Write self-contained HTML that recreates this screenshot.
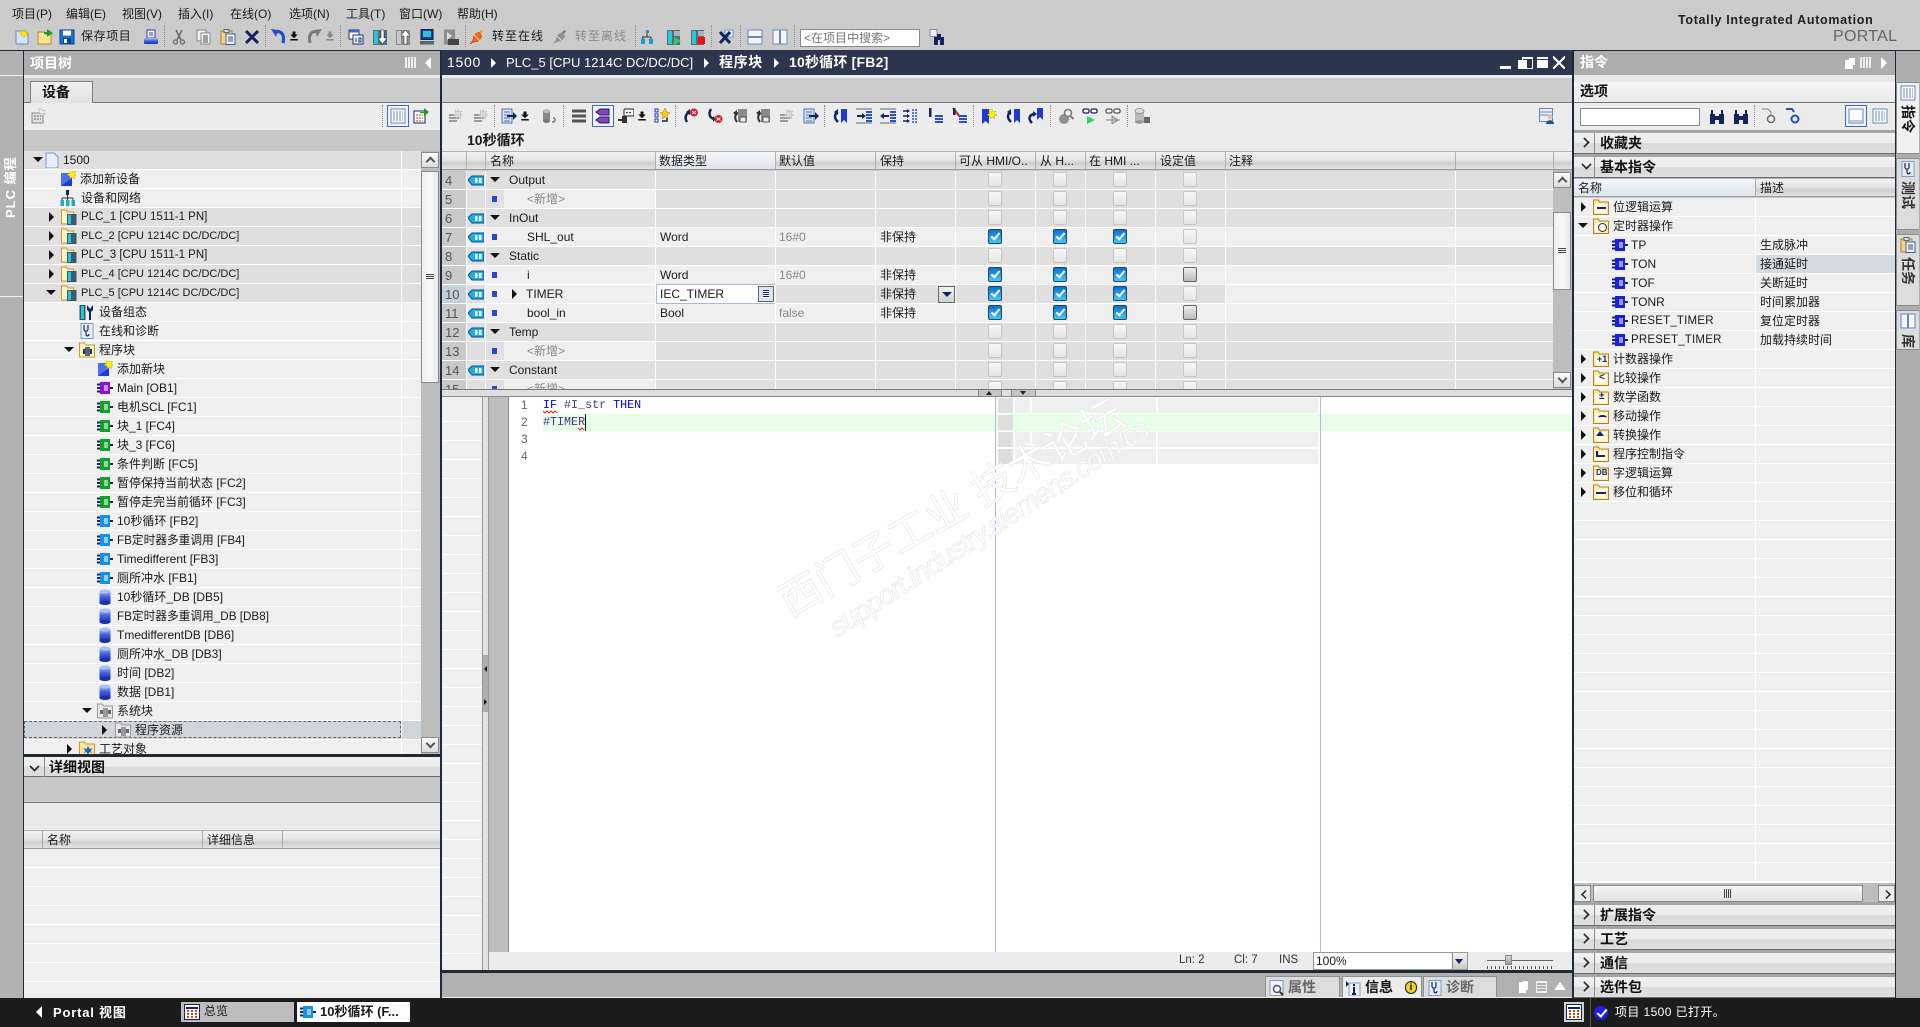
<!DOCTYPE html>
<html lang="zh"><head><meta charset="utf-8"><title>TIA Portal</title>
<style>
html,body{margin:0;padding:0;background:#1c1c1c}
#p{position:relative;width:1920px;height:1027px;overflow:hidden;background:#cbcbcb;font:12px/19px "Liberation Sans","WenQuanYi Zen Hei","Noto Sans CJK SC",sans-serif;color:#1a1a1a}
.a,.t,svg.i,.ar,.ad,.w{position:absolute}
.t{white-space:nowrap}
svg.i{width:16px;height:16px;overflow:visible}
.ar{width:0;height:0;border-left:5px solid #111;border-top:5px solid transparent;border-bottom:5px solid transparent}
.ad{width:0;height:0;border-top:5px solid #111;border-left:5px solid transparent;border-right:5px solid transparent}
.h{font-weight:bold;font-size:14px;color:#fff}
.sep{position:absolute;width:0;border-left:1px dotted #888;height:22px}
.hdr{background:linear-gradient(#f1f1f1 0,#e6e6e6 45%,#cfcfcf 65%,#e4e4e4 100%);border-top:1px solid #b4b4b4;border-bottom:1px solid #9a9a9a;box-sizing:border-box}
.phd{background:linear-gradient(#f0f0f0 0,#ececec 50%,#dadada 52%,#dedede 100%);border-bottom:1px solid #6e6e6e;box-sizing:border-box;position:absolute;left:1574px;width:321px;height:21px;font:bold 14px/20px "Liberation Sans","WenQuanYi Zen Hei","Noto Sans CJK SC",sans-serif;color:#111}
.phd span{position:absolute;left:26px;top:0}
.phd:before{content:"";position:absolute;left:20px;top:0;bottom:0;border-left:1px solid #8c8c8c}
.chev{position:absolute;left:6px;top:5px;width:7px;height:7px;border-top:2px solid #222;border-right:2px solid #222;transform:rotate(45deg) scale(.8)}
.chev.dn{transform:rotate(135deg) scale(.8);left:8px;top:3px}
/* tree */
#tree{position:absolute;left:24px;top:151px;width:397px;height:603px;overflow:hidden;background:#fff}
#tree>div{position:relative;height:18px;margin-bottom:1px;background:#efefef}
#tree>div.d{background:#dfdfdf}
/* table */
#tb{position:absolute;left:442px;top:171px;width:1111px;height:218px;overflow:hidden;background:#fff}
#tb>div{position:absolute;left:0;width:1111px;height:18px;background:#dfdfdf}
#tb>div.e{background:#efefef}
#tb .n{position:absolute;left:0;top:0;width:24px;height:18px;background:#c9c9c9;color:#555;font-size:13px;text-indent:3px}
#tb .m{position:absolute;left:62px;top:0;width:152px;height:18px;background:#efefef}
.k,.kc,.kd{position:absolute;top:1px;width:14px;height:15px;box-sizing:border-box;border-radius:2px}
.k{border:1px solid #c6c6c6;background:linear-gradient(#f8f8f8,#e4e4e4)}
.kd{border:1px solid #666;background:linear-gradient(#eee,#bbb)}
.kc{border:1px solid #1e4a6a;background:linear-gradient(#0c6fd0,#45c8f2)}
.kc:after{content:"";position:absolute;left:4px;top:1px;width:3px;height:7px;border:solid #fff;border-width:0 2px 2px 0;transform:rotate(40deg)}
.x1{left:546px}.x2{left:611px}.x3{left:671px}.x4{left:741px}
.vl{position:absolute;top:0;height:218px;width:1px;background:#fff}
.g{color:#888}
.sq{position:absolute;width:7px;height:4px}
/* right */
#ins{position:absolute;left:1574px;top:198px;width:321px;height:685px;background:#fff;overflow:hidden}
#ins>div{position:relative;height:18px;margin-bottom:1px;background:#efefef}
#ins .de{position:absolute;left:186px;top:0}
.tab{position:absolute;top:976px;height:21px;background:#dcdcdc;box-sizing:border-box;border:1px solid #8e8e8e;border-bottom:0;font:bold 14px/21px "Liberation Sans","WenQuanYi Zen Hei","Noto Sans CJK SC",sans-serif;color:#666}
.rt{position:absolute;left:1896px;width:23px;box-sizing:border-box;border:1px solid #8d8d8d;border-right:0;background:#dcdcdc}
.rtx{position:absolute;left:3px;top:22px;font:bold 14px/16px "Liberation Sans","WenQuanYi Zen Hei","Noto Sans CJK SC",sans-serif;transform:rotate(90deg);transform-origin:center;color:#333;width:16px;text-align:center;white-space:nowrap}
.sb{position:absolute;background:#f0f0f0;border:1px solid #8a8a8a;box-sizing:border-box}
.up,.dn2{position:absolute;width:18px;height:16px;background:linear-gradient(#fbfbfb,#dcdcdc);border:1px solid #8a8a8a;box-sizing:border-box}
.up:after,.dn2:after{content:"";position:absolute;left:5px;width:5px;height:5px;border:solid #555;border-width:2px 0 0 2px;transform:rotate(45deg);top:5px}
.dn2:after{transform:rotate(225deg);top:2px}
.p1{font-size:11.5px}.p2{font-size:11px}
</style></head><body>
<div id="p">
<svg width="0" height="0" style="position:absolute">
<defs>
<linearGradient id="bg" x1="0" y1="0" x2="0" y2="1"><stop offset="0" stop-color="#a9c0f5"/><stop offset=".5" stop-color="#3e5fe0"/><stop offset="1" stop-color="#1b2fa8"/></linearGradient>
<symbol id="new" viewBox="0 0 16 16"><path d="M2 2h9l3 3v10H2z" fill="#d8e4f8" stroke="#6c86b8"/><path d="M10 1l1 2 2-2-1 3 3 0-3 1 2 2-3-1-1 3-1-3-3 1 2-2-3-1h3l-1-3 2 2z" fill="#fff200" stroke="#d0b000" stroke-width=".4"/></symbol>
<symbol id="open" viewBox="0 0 16 16"><path d="M1 3h6l1 2h6v10H1z" fill="#fbe48e" stroke="#b58a2c"/><path d="M7 3h3V0l6 4-6 4V5H7z" fill="#1a9a2f"/></symbol>
<symbol id="save" viewBox="0 0 16 16"><path d="M1 1h14v14H1z" fill="#1d6fd8" stroke="#0a3f92"/><rect x="4" y="1.500" width="8" height="5" fill="#fff"/><rect x="4" y="9" width="8" height="6" fill="#0d3f8e"/><rect x="5" y="10" width="3" height="4" fill="#fff"/></symbol>
<symbol id="print" viewBox="0 0 16 16"><rect x="4" y="1" width="8" height="8" fill="#fff" stroke="#2236a8"/><path d="M6 4h4M6 6h4" stroke="#2236a8"/><rect x="1" y="9" width="14" height="6" rx="1" fill="url(#bg)"/></symbol>
<symbol id="cut" viewBox="0 0 16 16"><path d="M5 1l5 10M11 1L6 11" stroke="#6c6c6c" stroke-width="1.600" fill="none"/><circle cx="4.500" cy="13" r="2" fill="none" stroke="#6c6c6c" stroke-width="1.300"/><circle cx="11.500" cy="13" r="2" fill="none" stroke="#6c6c6c" stroke-width="1.300"/></symbol>
<symbol id="copy" viewBox="0 0 16 16"><rect x="1" y="1" width="9" height="11" fill="#eee" stroke="#888"/><rect x="5" y="4" width="9" height="11" fill="#f7f7f7" stroke="#888"/><path d="M7 7h5M7 9h5M7 11h5M7 13h5" stroke="#444"/></symbol>
<symbol id="paste" viewBox="0 0 16 16"><rect x="1" y="2" width="11" height="13" fill="#f3d583" stroke="#a47f28"/><rect x="4" y="0.500" width="5" height="3" fill="#ddd" stroke="#666"/><rect x="6" y="5" width="9" height="10.500" fill="#fff" stroke="#3a5aa0"/><path d="M8 8h5M8 10h5M8 12h5" stroke="#2b3e8a"/></symbol>
<symbol id="del" viewBox="0 0 16 16"><path d="M2 2l12 12M14 2L2 14" stroke="#14245e" stroke-width="3"/></symbol>
<symbol id="undo" viewBox="0 0 16 16"><path d="M3 3c7-2 11 2 9 11" fill="none" stroke="#1a52c8" stroke-width="3.200"/><path d="M0 0l7 1-2 7z" fill="#1a52c8"/></symbol>
<symbol id="redo" viewBox="0 0 16 16"><path d="M13 3C6 1 2 5 4 14" fill="none" stroke="#7a7a7a" stroke-width="3"/><path d="M16 0l-7 1 2 7z" fill="#7a7a7a"/></symbol>
<symbol id="dl" viewBox="0 0 16 16"><path d="M6 2h4v4h3l-5 5-5-5h3zM3 12h10v2H3z" fill="#111"/></symbol>
<symbol id="dlg" viewBox="0 0 16 16"><path d="M6 2h4v4h3l-5 5-5-5h3zM3 12h10v2H3z" fill="#888"/></symbol>
<symbol id="cmp" viewBox="0 0 16 16"><rect x="1" y="1" width="10" height="9" fill="#fff" stroke="#26367a"/><rect x="1" y="1" width="10" height="2.500" fill="#3a6ad0"/><rect x="5" y="6" width="10" height="9" fill="#e8eefa" stroke="#26367a"/><path d="M8 9v4M11 9h2v4h-2z" stroke="#26367a" fill="none"/></symbol>
<symbol id="down" viewBox="0 0 16 16"><rect x="1" y="1" width="14" height="15" fill="#5d6b78"/><rect x="2" y="2" width="4" height="13" fill="#26c7d8"/><path d="M9 1h3v8h3l-4.500 6L6 9h3z" fill="#fff" stroke="#123" stroke-width=".5"/></symbol>
<symbol id="upl" viewBox="0 0 16 16"><rect x="1" y="1" width="14" height="15" fill="#8a8a8a"/><rect x="2" y="2" width="4" height="13" fill="#c8c8c8"/><path d="M9 15h3V7h3l-4.500-6L6 7h3z" fill="#fff" stroke="#333" stroke-width=".5"/></symbol>
<symbol id="pc" viewBox="0 0 16 16"><rect x="2" y="0.500" width="12" height="10" fill="#1c3f8e" stroke="#0c1f55"/><rect x="4" y="2" width="8" height="6" fill="#2ec3d8"/><rect x="1" y="12" width="14" height="3.500" fill="#566"/></symbol>
<symbol id="rt" viewBox="0 0 16 16"><rect x="1" y="0.500" width="11" height="15" fill="#8d8d8d"/><path d="M4 3l5 4-5 4z" fill="#ddd"/><rect x="5" y="10" width="11" height="6" fill="#444"/></symbol>
<symbol id="on" viewBox="0 0 16 16"><path d="M1 15l3-4 1-5 5-3 2 3 1 1-3 5-5 1z" fill="#f4641e" stroke="#a83800" stroke-width=".5"/><path d="M10 3l3-2 1 1-2 3z" fill="#f4a020"/><path d="M4 5l7 7" stroke="#ffd8a0"/></symbol>
<symbol id="off" viewBox="0 0 16 16"><path d="M1 15l3-4 1-5 5-3 3 4-3 5-5 1z" fill="#8f8f8f"/><path d="M10 3l3-2 1 1-2 3z" fill="#777"/><path d="M4 6l6 6" stroke="#ddd"/></symbol>
<symbol id="ap" viewBox="0 0 16 16"><rect x="5" y="1" width="3" height="3" fill="#1a9ac8"/><path d="M1 8h9M6 4v4M2 8v3M10 8v3" stroke="#333"/><rect x="0" y="10" width="4" height="5" fill="#1a9ac8"/><rect x="8" y="10" width="4" height="5" fill="#1a9ac8"/></symbol>
<symbol id="stG" viewBox="0 0 16 16"><rect x="1" y="1" width="13" height="15" fill="#5d6b78"/><rect x="2" y="2" width="4" height="13" fill="#26c7d8"/><path d="M8 8l7 4-7 4z" fill="#2fd060"/><rect x="8" y="2" width="6" height="5" fill="#a8b0b8"/></symbol>
<symbol id="stR" viewBox="0 0 16 16"><rect x="1" y="1" width="13" height="15" fill="#5d6b78"/><rect x="2" y="2" width="4" height="13" fill="#26c7d8"/><rect x="8" y="8" width="7" height="7" fill="#f01010"/><rect x="8" y="2" width="6" height="5" fill="#a8b0b8"/></symbol>
<symbol id="xx" viewBox="0 0 16 16"><rect x="7" y="1" width="8" height="7" fill="#e4ecf8" stroke="#7c90b8"/><path d="M2 3l10 11M12 3L2 14" stroke="#14245e" stroke-width="3"/></symbol>
<symbol id="h2" viewBox="0 0 16 16"><rect x="1" y="1" width="14" height="14" fill="#f4f6fb" stroke="#6a86c0"/><path d="M1 8h14" stroke="#6a86c0" stroke-width="2"/></symbol>
<symbol id="v2" viewBox="0 0 16 16"><rect x="1" y="1" width="14" height="14" fill="#f4f6fb" stroke="#6a86c0"/><path d="M8 1v14" stroke="#6a86c0" stroke-width="2"/></symbol>
<symbol id="find" viewBox="0 0 16 16"><rect x="1" y="0.500" width="7" height="7" fill="#eef" stroke="#889"/><rect x="5" y="8" width="4" height="8" fill="#14245e"/><rect x="11" y="8" width="4" height="8" fill="#14245e"/><rect x="8" y="5" width="4" height="6" fill="#14245e"/></symbol>
<symbol id="bino" viewBox="0 0 16 16"><rect x="1" y="5" width="5" height="10" fill="#14245e"/><rect x="10" y="5" width="5" height="10" fill="#14245e"/><rect x="6" y="7" width="4" height="4" fill="#14245e"/><path d="M3 1v4M13 1v4" stroke="#14245e" stroke-width="2"/></symbol>
<symbol id="lst" viewBox="0 0 16 16"><path d="M1 3h14M1 8h14M1 13h14" stroke="#555" stroke-width="3"/></symbol>
<symbol id="fade" viewBox="0 0 16 16"><path d="M1 7h10M1 10h10M1 13h8" stroke="#9a9a9a" stroke-width="2"/><path d="M10 1l1 3 3-1-2 3 3 1-3 1 1 3-3-2-2 2 0-3-3-1 3-2-1-3 3 2z" fill="#d8d8d8" stroke="#aaa" stroke-width=".4"/></symbol>
<symbol id="iface" viewBox="0 0 16 16"><rect x="1" y="1" width="10" height="14" fill="#d4e0f8" stroke="#5572ae"/><path d="M3 4h6M3 7h6M3 10h6M3 13h6" stroke="#5572ae"/><path d="M6 7h6V4l4 4-4 4V9H6z" fill="#14245e"/></symbol>
<symbol id="cyl" viewBox="0 0 16 16"><rect x="2" y="3" width="7" height="10" fill="#8a8a8a"/><ellipse cx="5.500" cy="3" rx="3.500" ry="2" fill="#bbb"/><ellipse cx="5.500" cy="13" rx="3.500" ry="2" fill="#7a7a7a"/><path d="M11 14c4 0 4-4 1-4" fill="none" stroke="#777" stroke-width="1.500"/></symbol>
<symbol id="tagp" viewBox="0 0 16 16"><path d="M1 4l4-3h9v6H5zM1 12l4-3h9v6H5z" fill="#8a40c8" stroke="#14245e"/></symbol>
<symbol id="mon" viewBox="0 0 16 16"><rect x="6" y="1" width="10" height="7" rx="1" fill="#fff" stroke="#222"/><circle cx="9" cy="4.500" r=".8"/><circle cx="12" cy="4.500" r=".8"/><path d="M0 11h4V8h5v7H4v-2H0z" fill="#333"/></symbol>
<symbol id="star" viewBox="0 0 16 16"><rect x="1" y="1" width="3" height="3" fill="#fff" stroke="#2236a8"/><rect x="1" y="6" width="3" height="3" fill="#fff" stroke="#2236a8"/><rect x="1" y="11" width="3" height="3" fill="#fff" stroke="#2236a8"/><path d="M11 0l2 4 3 1-3 2 1 4-3-2-3 2 1-4-3-2 3-1z" fill="#f4c820" stroke="#a88410" stroke-width=".5"/><path d="M8 13h5v-3" fill="none" stroke="#14245e" stroke-width="1.500"/></symbol>
<symbol id="cr" viewBox="0 0 16 16"><path d="M4 14C1 9 3 5 8 4" fill="none" stroke="#14245e" stroke-width="2.500"/><path d="M7 1v6l-4-3z" fill="#14245e"/><circle cx="11" cy="4.500" r="4" fill="#d8202a"/><path d="M9 3l4 3M13 3L9 6" stroke="#fff"/></symbol>
<symbol id="cr2" viewBox="0 0 16 16"><path d="M4 1C1 6 3 10 7 11" fill="none" stroke="#14245e" stroke-width="2.500"/><path d="M6 8v6l3-3z" fill="#14245e"/><circle cx="11.500" cy="11" r="4" fill="#d8202a"/><path d="M9.500 9.500l4 3M13.500 9.500l-4 3" stroke="#fff"/></symbol>
<symbol id="gr1" viewBox="0 0 16 16"><rect x="7" y="1" width="9" height="13" fill="#8a8a8a"/><rect x="9" y="9" width="6" height="5" fill="#eee" stroke="#555"/><path d="M6 14C3 10 4 6 7 5" fill="none" stroke="#333" stroke-width="2"/><path d="M6 2v6l-4-3z" fill="#333"/></symbol>
<symbol id="ind" viewBox="0 0 16 16"><path d="M0 1h16M0 15h16" stroke="#aaa" stroke-width="2"/><path d="M1 7h5V5l4 3-4 3V9H1z" fill="#14245e"/><path d="M10 4h6M10 7h6M10 10h6M10 13h6" stroke="#2a50d0" stroke-width="2"/></symbol>
<symbol id="oud" viewBox="0 0 16 16"><path d="M0 1h16M0 15h16" stroke="#aaa" stroke-width="2"/><path d="M9 7H4V5L0 8l4 3V9h5z" fill="#14245e"/><path d="M10 4h6M10 7h6M10 10h6M10 13h6" stroke="#2a50d0" stroke-width="2"/></symbol>
<symbol id="ali" viewBox="0 0 16 16"><path d="M0 3h6M0 8h6M0 13h6" stroke="#14245e" stroke-width="1.500"/><path d="M4 1l3 2-3 2M4 6l3 2-3 2M4 11l3 2-3 2" fill="#14245e"/><path d="M9 2h6M9 5h6M9 8h6M9 11h6M9 14h6" stroke="#2a50d0" stroke-width="1.600" stroke-dasharray="2 1"/></symbol>
<symbol id="cmt" viewBox="0 0 16 16"><rect x="1" y="0" width="2.500" height="9" fill="#14245e"/><path d="M7 8h8M7 11h8M7 14h8" stroke="#2a50d0" stroke-width="2"/></symbol>
<symbol id="uncm" viewBox="0 0 16 16"><path d="M1 0l7 9" stroke="#e01818" stroke-width="2"/><rect x="1" y="0" width="2.500" height="7" fill="#14245e"/><path d="M7 8h8M7 11h8M7 14h8" stroke="#2a50d0" stroke-width="2"/></symbol>
<symbol id="bm" viewBox="0 0 16 16"><path d="M1 1h7v15l-3.500-3L1 16z" fill="#1a3cd0"/><path d="M11 1l1 3 3-1-2 3 3 1-3 1 1 3-3-2-2 2 0-3-3-1 3-2-1-3z" fill="#fff200" stroke="#b09000" stroke-width=".4"/></symbol>
<symbol id="bml" viewBox="0 0 16 16"><path d="M9 1h6v14l-3-3-3 3z" fill="#1a3cd0"/><path d="M6 14C2 10 2 6 6 4" fill="none" stroke="#14245e" stroke-width="2.500"/><path d="M6 1v6l-4-3z" fill="#14245e"/></symbol>
<symbol id="bmr" viewBox="0 0 16 16"><path d="M9 0h6v12l-3-3-3 3z" fill="#1a3cd0"/><path d="M4 15C0 11 1 7 6 6" fill="none" stroke="#14245e" stroke-width="2.500"/><path d="M5 3v6l4-3z" fill="#14245e"/></symbol>
<symbol id="mag" viewBox="0 0 16 16"><circle cx="6" cy="11" r="5" fill="#8f8f8f"/><circle cx="10" cy="5" r="3.500" fill="#eee" stroke="#777" stroke-width="1.500"/><path d="M12.500 8l3 3" stroke="#777" stroke-width="2"/></symbol>
<symbol id="gl" viewBox="0 0 16 16"><rect x="1" y="1" width="6" height="4" rx="1.500" fill="#fff" stroke="#14245e" stroke-width="1.300"/><rect x="9" y="1" width="6" height="4" rx="1.500" fill="#fff" stroke="#14245e" stroke-width="1.300"/><path d="M5 8l8 4-8 4z" fill="#2fd060"/></symbol>
<symbol id="gl2" viewBox="0 0 16 16"><rect x="1" y="1" width="6" height="4" rx="1.500" fill="#fff" stroke="#555" stroke-width="1.300"/><rect x="9" y="1" width="6" height="4" rx="1.500" fill="#fff" stroke="#555" stroke-width="1.300"/><path d="M7 8l6 4-6 4zM1 12h14" fill="#ccc" stroke="#888"/></symbol>
<symbol id="dbl" viewBox="0 0 16 16"><rect x="1" y="3" width="9" height="11" fill="#bbb"/><ellipse cx="5.500" cy="3" rx="4.500" ry="2.500" fill="#ddd" stroke="#999"/><ellipse cx="5.500" cy="14" rx="4.500" ry="1.800" fill="#999"/><rect x="10" y="9" width="6" height="6" fill="#666"/></symbol>
<symbol id="usr" viewBox="0 0 16 16"><rect x="0.500" y="0.500" width="13" height="13" fill="#e8eefa" stroke="#6a86c0"/><path d="M1 4h12M1 7h12" stroke="#6a86c0"/><circle cx="11" cy="9" r="2.500" fill="#f0c090"/><path d="M7 16c0-5 8-5 8 0z" fill="#1a50a0"/></symbol>
<symbol id="grid" viewBox="0 0 16 16"><rect x="1" y="1" width="14" height="14" fill="#fff" stroke="#6a86c0"/><path d="M3 4h10M3 6h10M3 8h10M3 10h10M3 12h10" stroke="#6a86c0" stroke-dasharray="2 1"/></symbol>
<symbol id="pan" viewBox="0 0 16 16"><rect x="1" y="1" width="14" height="14" fill="#fff" stroke="#6a86c0"/><rect x="2" y="12" width="12" height="2" fill="#b8c8e8"/></symbol>
<symbol id="cal" viewBox="0 0 16 16"><rect x="1" y="3" width="11" height="12" fill="#fff" stroke="#14245e"/><path d="M3 7h7M3 10h7M3 13h7" stroke="#c04810" stroke-dasharray="2 1"/><path d="M7 4h4V0l5 4-5 4V5H7z" fill="#1a9a2f"/></symbol>
<symbol id="addd" viewBox="0 0 16 16"><path d="M1 5h11v10H1z" fill="#ddd" stroke="#888"/><path d="M3 8h7M3 11h7" stroke="#666" stroke-dasharray="2 1"/><path d="M10 0l1 3 3-1-2 3 3 1-3 1-2-2-2 1 1-3-2-2z" fill="#eee" stroke="#999" stroke-width=".4"/></symbol>
<symbol id="nw" viewBox="0 0 16 16"><path d="M1 2h11v13H1z" fill="#1a3cd0"/><path d="M1 2h11v5L1 15z" fill="#4a70f0"/><path d="M12 -2l1 3 3-1-2 3 3 1-3 1 1 3-3-2-2 2 0-3-3-1 3-2-1-3z" fill="#fff200" stroke="#c0a000" stroke-width=".4"/></symbol>
<symbol id="net" viewBox="0 0 16 16"><rect x="6" y="0" width="3" height="5" fill="#14245e"/><path d="M2 8h11M2 8v3M7.500 5v6M13 8v3" stroke="#333"/><rect x="0.500" y="10" width="3.500" height="6" fill="#22a8c8"/><rect x="6" y="10" width="3.500" height="6" fill="#22a8c8"/><rect x="11.500" y="10" width="3.500" height="6" fill="#22a8c8"/></symbol>
<symbol id="doc" viewBox="0 0 16 16"><path d="M2 1h8l4 4v11H2z" fill="#e6edfb" stroke="#7f9ac8"/></symbol>
<symbol id="plc" viewBox="0 0 16 16"><path d="M0.500 1h5l1 2h6v12H0.500z" fill="#fff2c4" stroke="#c8982c"/><rect x="6" y="5" width="9.500" height="11" fill="#3a5a70"/><rect x="7" y="6" width="3" height="9" fill="#28c4d8"/></symbol>
<symbol id="cfg" viewBox="0 0 16 16"><rect x="0.500" y="1" width="6" height="15" fill="#2a5a78"/><rect x="2" y="2" width="3" height="13" fill="#28c4d8"/><path d="M8 1l3 4 3-4v5l-2 2v8h-2V8L8 6z" fill="#14245e"/></symbol>
<symbol id="dia" viewBox="0 0 16 16"><rect x="2" y="0.500" width="12" height="15" fill="#e6edfb" stroke="#7f9ac8"/><path d="M5 2v4c0 3 4 3 4 0V2M7 9v2c0 3 3 2 3 0" fill="none" stroke="#14245e" stroke-width="1.200"/></symbol>
<symbol id="pfo" viewBox="0 0 16 16"><path d="M0.500 1h5l1 2h9v12H0.500z" fill="#fff2c4" stroke="#c8982c"/><rect x="4" y="7" width="9" height="5" fill="#333"/><rect x="6" y="5" width="5" height="9" fill="#4a6a80"/></symbol>
<symbol id="gfo" viewBox="0 0 16 16"><path d="M0.500 1h5l1 2h9v12H0.500z" fill="#e8e8e8" stroke="#999"/><rect x="3" y="7" width="11" height="4" fill="#666"/><rect x="6" y="5" width="5" height="9" fill="#999"/></symbol>
<symbol id="tfo" viewBox="0 0 16 16"><path d="M0.500 1h5l1 2h9v12H0.500z" fill="#fbe6a0" stroke="#c8982c"/><path d="M9 5l1.500 3 3-1-2 3 2 2-3-1-1.500 3-1.500-3-3 1 2-2-2-3 3 1z" fill="#1a60d0"/></symbol>
<symbol id="blk" viewBox="0 0 16 16"><rect x="0" y="7" width="16" height="2" fill="#14245e"/><rect x="0" y="3.500" width="4" height="2" fill="#14245e"/><rect x="0" y="10.500" width="4" height="2" fill="#14245e"/><rect x="3" y="2" width="10" height="12" fill="currentColor"/><rect x="7" y="5" width="4" height="6" fill="#fff" opacity=".55"/></symbol>
<symbol id="db" viewBox="0 0 16 16"><rect x="2.500" y="2" width="11" height="12" fill="url(#bg)"/><ellipse cx="8" cy="14" rx="5.500" ry="2" fill="#1b2fa8"/><ellipse cx="8" cy="2.500" rx="5.500" ry="2" fill="#a9c0f5"/></symbol>
<symbol id="tag" viewBox="0 0 16 16"><path d="M0 8l4-4h12v9H4z" fill="#19b0e6" stroke="#0a4a8a"/><rect x="7" y="6" width="2.500" height="5" fill="#fff"/><rect x="11" y="6" width="2.500" height="5" fill="#fff"/></symbol>
<symbol id="ifo" viewBox="0 0 16 16"><path d="M0.500 1h5l1 2h9v12.500H0.500z" fill="#fce9a8" stroke="#b48420"/><rect x="2" y="5" width="12" height="9" fill="#fffbe4"/></symbol>
<symbol id="cyc" viewBox="0 0 16 16"><path d="M1 1h6l3 3v4" fill="#e8e8e8" stroke="#888"/><circle cx="10" cy="11" r="3.500" fill="none" stroke="#666" stroke-width="1.500"/></symbol>
<symbol id="cyb" viewBox="0 0 16 16"><path d="M1 1h6l2 3" fill="none" stroke="#1a50d0" stroke-width="2"/><circle cx="10" cy="11" r="3.500" fill="none" stroke="#1a50d0" stroke-width="2"/></symbol>
<symbol id="tab" viewBox="0 0 16 16"><rect x="0.500" y="0.500" width="15" height="15" fill="#fff" stroke="#14245e"/><path d="M2 4h12" stroke="#14245e" stroke-width="2"/><path d="M3 7h2M7 7h2M11 7h2M3 10h2M7 10h2M11 10h2M3 13h2M7 13h2M11 13h2" stroke="#c04810" stroke-width="2"/></symbol>
<symbol id="prp" viewBox="0 0 16 16"><rect x="1" y="0.500" width="13" height="15" fill="#eef3fd" stroke="#7f9ac8"/><circle cx="8" cy="9" r="3.500" fill="none" stroke="#555" stroke-width="1.500"/><path d="M11 12l3 3" stroke="#333" stroke-width="2"/></symbol>
<symbol id="inf" viewBox="0 0 16 16"><rect x="3" y="3" width="11" height="13" fill="#eef3fd" stroke="#7f9ac8"/><path d="M0 1l3 3-3 3zM3 8l3 3" fill="#14245e"/><path d="M8 4v2M8 7v7M6 14h4" stroke="#14245e" stroke-width="2"/></symbol>
</defs></svg>

<!-- top -->
<div class="a" style="left:0;top:0;width:1920px;height:50px;background:#cbcbcb"></div>
<span class="t" style="left:12px;top:5px">项目(P)</span><span class="t" style="left:66px;top:5px">编辑(E)</span><span class="t" style="left:122px;top:5px">视图(V)</span><span class="t" style="left:178px;top:5px">插入(I)</span><span class="t" style="left:230px;top:5px">在线(O)</span><span class="t" style="left:289px;top:5px">选项(N)</span><span class="t" style="left:346px;top:5px">工具(T)</span><span class="t" style="left:399px;top:5px">窗口(W)</span><span class="t" style="left:457px;top:5px">帮助(H)</span>
<svg class="i" style="left:14px;top:29px"><use href="#new"/></svg><svg class="i" style="left:37px;top:29px"><use href="#open"/></svg><svg class="i" style="left:59px;top:29px"><use href="#save"/></svg>
<span class="t" style="left:81px;top:27px;letter-spacing:.6px">保存项目</span>
<svg class="i" style="left:143px;top:29px"><use href="#print"/></svg><div class="sep" style="left:164px;top:25px"></div>
<svg class="i" style="left:171px;top:29px"><use href="#cut"/></svg><svg class="i" style="left:196px;top:29px"><use href="#copy"/></svg><svg class="i" style="left:220px;top:29px"><use href="#paste"/></svg><svg class="i" style="left:244px;top:29px"><use href="#del"/></svg><div class="sep" style="left:265px;top:25px"></div>
<svg class="i" style="left:271px;top:29px"><use href="#undo"/></svg><svg class="i" style="left:288px;top:30px;width:12px;height:12px"><use href="#dl"/></svg><svg class="i" style="left:306px;top:29px"><use href="#redo"/></svg><svg class="i" style="left:324px;top:30px;width:12px;height:12px"><use href="#dlg"/></svg><div class="sep" style="left:340px;top:25px"></div>
<svg class="i" style="left:348px;top:29px"><use href="#cmp"/></svg><svg class="i" style="left:372px;top:29px"><use href="#down"/></svg><svg class="i" style="left:395px;top:29px"><use href="#upl"/></svg><svg class="i" style="left:419px;top:29px"><use href="#pc"/></svg><svg class="i" style="left:443px;top:29px"><use href="#rt"/></svg><div class="sep" style="left:465px;top:25px"></div>
<svg class="i" style="left:469px;top:29px"><use href="#on"/></svg><span class="t" style="left:492px;top:27px;letter-spacing:1px">转至在线</span>
<svg class="i" style="left:552px;top:29px"><use href="#off"/></svg><span class="t" style="left:575px;top:27px;letter-spacing:1px;color:#8c8c8c">转至离线</span><div class="sep" style="left:635px;top:25px"></div>
<svg class="i" style="left:641px;top:29px"><use href="#ap"/></svg><svg class="i" style="left:666px;top:29px"><use href="#stG"/></svg><svg class="i" style="left:690px;top:29px"><use href="#stR"/></svg><div class="sep" style="left:711px;top:25px"></div>
<svg class="i" style="left:718px;top:29px"><use href="#xx"/></svg><div class="sep" style="left:740px;top:25px"></div>
<svg class="i" style="left:747px;top:29px"><use href="#h2"/></svg><svg class="i" style="left:772px;top:29px"><use href="#v2"/></svg><div class="sep" style="left:794px;top:25px"></div>
<div class="a" style="left:800px;top:29px;width:120px;height:18px;background:#fff;border:1px solid #8a8a8a;box-sizing:border-box;color:#777;line-height:17px;padding-left:3px">&lt;在项目中搜索&gt;</div>
<svg class="i" style="left:929px;top:29px"><use href="#find"/></svg>
<span class="t" style="left:1678px;top:11px;font-weight:bold;font-size:12.5px;letter-spacing:.68px;color:#222">Totally Integrated Automation</span>
<span class="t" style="left:1833px;top:27px;font-size:16px;color:#666;letter-spacing:.3px">PORTAL</span>
<div class="a" style="left:0;top:50px;width:1920px;height:1px;background:#1e2a3c"></div>

<!-- left strip -->
<div class="a" style="left:0;top:51px;width:23px;height:947px;background:#b2b2b2"></div>
<div class="a" style="left:0;top:75px;width:23px;height:1px;background:#f0f0f0"></div>
<div class="a" style="left:0;top:296px;width:23px;height:1px;background:#f0f0f0"></div>
<span class="t" style="left:-19px;top:178px;width:60px;height:20px;transform:rotate(-90deg);color:#fff;font-weight:bold;font-size:13px;line-height:20px;text-align:center;letter-spacing:1px">PLC 编程</span>
<div class="a" style="left:23px;top:51px;width:1px;height:947px;background:#1e2a3c"></div>

<!-- left panel -->
<div class="a" style="left:24px;top:51px;width:416px;height:24px;background:#adadad"></div>
<span class="t h" style="left:30px;top:52px;line-height:22px">项目树</span>
<div class="a" style="left:405px;top:57px;width:11px;height:11px;background:repeating-linear-gradient(90deg,#eee 0 2px,#adadad 2px 3px)"></div>
<div class="a" style="left:425px;top:57px;width:0;height:0;border-right:6px solid #fff;border-top:6px solid transparent;border-bottom:6px solid transparent"></div>
<div class="a" style="left:24px;top:75px;width:416px;height:3px;background:#ececec"></div>
<div class="a" style="left:24px;top:78px;width:416px;height:25px;background:#cdcdcd;border-bottom:1px solid #7a7a7a;box-sizing:border-box"></div>
<div class="a" style="left:30px;top:81px;width:63px;height:22px;box-sizing:border-box;border:1px solid #808080;border-bottom:0;background:linear-gradient(#f0f0f0,#e2e2e2);font:bold 14px/20px 'Liberation Sans','WenQuanYi Zen Hei','Noto Sans CJK SC',sans-serif;padding-left:11px;color:#111">设备</div>
<div class="a" style="left:24px;top:103px;width:416px;height:27px;background:#ececec"></div>
<svg class="i" style="left:31px;top:108px"><use href="#addd"/></svg><div class="sep" style="left:382px;top:105px"></div>
<div class="a" style="left:387px;top:105px;width:22px;height:22px;box-sizing:border-box;border:1px solid #3a6ad0;background:#f4f4f4"></div><svg class="i" style="left:390px;top:108px"><use href="#grid"/></svg><svg class="i" style="left:413px;top:108px"><use href="#cal"/></svg>
<div class="a" style="left:24px;top:130px;width:416px;height:21px;background:#c8c8c8"></div>

<div id="tree">
<div class="d"><i class="ad" style="left:9px;top:6px"></i><svg class="i" style="left:20px;top:1px"><use href="#doc"/></svg><span class="t" style="left:39px;top:0">1500</span></div>
<div><svg class="i" style="left:36px;top:1px"><use href="#nw"/></svg><span class="t" style="left:56px;top:0">添加新设备</span></div>
<div><svg class="i" style="left:36px;top:1px"><use href="#net"/></svg><span class="t" style="left:57px;top:0">设备和网络</span></div>
<div class="d"><i class="ar" style="left:25px;top:4px"></i><svg class="i" style="left:37px;top:1px"><use href="#plc"/></svg><span class="t p1" style="left:57px;top:0">PLC_1 [CPU 1511-1 PN]</span></div>
<div class="d"><i class="ar" style="left:25px;top:4px"></i><svg class="i" style="left:37px;top:1px"><use href="#plc"/></svg><span class="t p2" style="left:57px;top:0">PLC_2 [CPU 1214C DC/DC/DC]</span></div>
<div class="d"><i class="ar" style="left:25px;top:4px"></i><svg class="i" style="left:37px;top:1px"><use href="#plc"/></svg><span class="t p1" style="left:57px;top:0">PLC_3 [CPU 1511-1 PN]</span></div>
<div class="d"><i class="ar" style="left:25px;top:4px"></i><svg class="i" style="left:37px;top:1px"><use href="#plc"/></svg><span class="t p2" style="left:57px;top:0">PLC_4 [CPU 1214C DC/DC/DC]</span></div>
<div class="d"><i class="ad" style="left:22px;top:6px"></i><svg class="i" style="left:37px;top:1px"><use href="#plc"/></svg><span class="t p2" style="left:57px;top:0">PLC_5 [CPU 1214C DC/DC/DC]</span></div>
<div><svg class="i" style="left:55px;top:1px"><use href="#cfg"/></svg><span class="t" style="left:75px;top:0">设备组态</span></div>
<div><svg class="i" style="left:55px;top:1px"><use href="#dia"/></svg><span class="t" style="left:75px;top:0">在线和诊断</span></div>
<div><i class="ad" style="left:40px;top:6px"></i><svg class="i" style="left:55px;top:1px"><use href="#pfo"/></svg><span class="t" style="left:75px;top:0">程序块</span></div>
<div><svg class="i" style="left:73px;top:1px"><use href="#nw"/></svg><span class="t" style="left:93px;top:0">添加新块</span></div>
<div><svg class="i" style="left:73px;top:1px;color:#9010d0"><use href="#blk"/></svg><span class="t" style="left:93px;top:0">Main [OB1]</span></div>
<div><svg class="i" style="left:73px;top:1px;color:#12a02a"><use href="#blk"/></svg><span class="t" style="left:93px;top:0">电机SCL [FC1]</span></div>
<div><svg class="i" style="left:73px;top:1px;color:#12a02a"><use href="#blk"/></svg><span class="t" style="left:93px;top:0">块_1 [FC4]</span></div>
<div><svg class="i" style="left:73px;top:1px;color:#12a02a"><use href="#blk"/></svg><span class="t" style="left:93px;top:0">块_3 [FC6]</span></div>
<div><svg class="i" style="left:73px;top:1px;color:#12a02a"><use href="#blk"/></svg><span class="t" style="left:93px;top:0">条件判断 [FC5]</span></div>
<div><svg class="i" style="left:73px;top:1px;color:#12a02a"><use href="#blk"/></svg><span class="t" style="left:93px;top:0">暂停保持当前状态 [FC2]</span></div>
<div><svg class="i" style="left:73px;top:1px;color:#12a02a"><use href="#blk"/></svg><span class="t" style="left:93px;top:0">暂停走完当前循环 [FC3]</span></div>
<div><svg class="i" style="left:73px;top:1px;color:#1290ea"><use href="#blk"/></svg><span class="t" style="left:93px;top:0">10秒循环 [FB2]</span></div>
<div><svg class="i" style="left:73px;top:1px;color:#1290ea"><use href="#blk"/></svg><span class="t" style="left:93px;top:0;font-size:11.7px">FB定时器多重调用 [FB4]</span></div>
<div><svg class="i" style="left:73px;top:1px;color:#1290ea"><use href="#blk"/></svg><span class="t" style="left:93px;top:0">Timedifferent [FB3]</span></div>
<div><svg class="i" style="left:73px;top:1px;color:#1290ea"><use href="#blk"/></svg><span class="t" style="left:93px;top:0">厕所冲水 [FB1]</span></div>
<div><svg class="i" style="left:73px;top:1px"><use href="#db"/></svg><span class="t" style="left:93px;top:0">10秒循环_DB [DB5]</span></div>
<div><svg class="i" style="left:73px;top:1px"><use href="#db"/></svg><span class="t" style="left:93px;top:0;font-size:11.7px">FB定时器多重调用_DB [DB8]</span></div>
<div><svg class="i" style="left:73px;top:1px"><use href="#db"/></svg><span class="t" style="left:93px;top:0">TmedifferentDB [DB6]</span></div>
<div><svg class="i" style="left:73px;top:1px"><use href="#db"/></svg><span class="t" style="left:93px;top:0">厕所冲水_DB [DB3]</span></div>
<div><svg class="i" style="left:73px;top:1px"><use href="#db"/></svg><span class="t" style="left:93px;top:0">时间 [DB2]</span></div>
<div><svg class="i" style="left:73px;top:1px"><use href="#db"/></svg><span class="t" style="left:93px;top:0">数据 [DB1]</span></div>
<div><i class="ad" style="left:58px;top:6px"></i><svg class="i" style="left:73px;top:1px"><use href="#gfo"/></svg><span class="t" style="left:93px;top:0">系统块</span></div>
<div style="background:#d0d5da"><i class="a" style="left:0;top:0;width:377px;height:17px;box-sizing:border-box;border:1px dashed #666"></i><i class="ar" style="left:78px;top:4px"></i><svg class="i" style="left:91px;top:1px"><use href="#gfo"/></svg><span class="t" style="left:111px;top:0">程序资源</span></div>
<div><i class="ar" style="left:43px;top:4px"></i><svg class="i" style="left:55px;top:1px"><use href="#tfo"/></svg><span class="t" style="left:75px;top:0">工艺对象</span></div>
</div>
<div class="a" style="left:401px;top:151px;width:1px;height:603px;background:#fff"></div>
<div class="a" style="left:421px;top:151px;width:19px;height:603px;background:#bdbdbd"></div>
<div class="up" style="left:421px;top:152px"></div>
<div class="sb" style="left:421px;top:171px;width:18px;height:212px;background:linear-gradient(90deg,#eee,#f8f8f8,#e8e8e8)"></div>
<div class="a" style="left:426px;top:274px;width:8px;height:6px;background:repeating-linear-gradient(#444 0 1px,transparent 1px 2px)"></div>
<div class="dn2" style="left:421px;top:737px"></div>

<!-- detail -->
<div class="a" style="left:24px;top:754px;width:416px;height:3px;background:#1e2a3c"></div>
<div class="a" style="left:24px;top:757px;width:416px;height:20px;background:linear-gradient(#f0f0f0 0,#ececec 50%,#dadada 52%,#dedede 100%);border-bottom:1px solid #6e6e6e;box-sizing:border-box"></div>
<div class="a" style="left:44px;top:757px;width:1px;height:20px;background:#8c8c8c"></div>
<div class="chev dn" style="left:30px;top:762px"></div>
<span class="t" style="left:49px;top:758px;font-weight:bold;font-size:14px;color:#111">详细视图</span>
<div class="a" style="left:24px;top:777px;width:416px;height:26px;background:#c8c8c8;border-bottom:1px solid #7a7a7a;box-sizing:border-box"></div>
<div class="a" style="left:24px;top:803px;width:416px;height:27px;background:#e9e9e9"></div>
<div class="a hdr" style="left:24px;top:830px;width:416px;height:19px"></div>
<div class="a" style="left:42px;top:831px;width:1px;height:17px;background:#a8a8a8"></div><div class="a" style="left:202px;top:831px;width:1px;height:17px;background:#a8a8a8"></div><div class="a" style="left:282px;top:831px;width:1px;height:17px;background:#a8a8a8"></div>
<span class="t" style="left:47px;top:831px">名称</span><span class="t" style="left:207px;top:831px">详细信息</span>
<div class="a" style="left:24px;top:849px;width:416px;height:149px;background:repeating-linear-gradient(#efefef 0 18px,#fff 18px 19px)"></div>
<div class="a" style="left:440px;top:51px;width:2px;height:947px;background:#1e2a3c"></div>

<!-- center -->
<div class="a" style="left:442px;top:50px;width:1130px;height:25px;background:#2d364f"></div>
<span class="t" style="left:447px;top:53px;color:#fff;font-size:14px;letter-spacing:.7px">1500</span>
<i class="ar" style="left:491px;top:58px;border-left-color:#fff"></i>
<span class="t" style="left:506px;top:53px;color:#fff;font-size:13px">PLC_5 [CPU 1214C DC/DC/DC]</span>
<i class="ar" style="left:704px;top:58px;border-left-color:#fff"></i>
<span class="t" style="left:719px;top:53px;color:#fff;font-weight:bold;font-size:14px;letter-spacing:.6px">程序块</span>
<i class="ar" style="left:774px;top:58px;border-left-color:#fff"></i>
<span class="t" style="left:789px;top:53px;color:#fff;font-weight:bold;font-size:14px;letter-spacing:.2px">10秒循环 [FB2]</span>
<div class="a" style="left:1500px;top:66px;width:11px;height:3px;background:#fff"></div>
<div class="a" style="left:1522px;top:57px;width:9px;height:9px;border:1px solid #fff;border-top-width:2px"></div><div class="a" style="left:1518px;top:60px;width:9px;height:9px;background:#fff"></div>
<div class="a" style="left:1537px;top:57px;width:11px;height:11px;background:#fff;border-top:0"></div><div class="a" style="left:1537px;top:59px;width:11px;height:1px;background:#2d364f"></div>
<div class="a" style="left:1553px;top:56px;width:12px;height:13px;background:linear-gradient(45deg,transparent 44%,#fff 44% 56%,transparent 56%),linear-gradient(-45deg,transparent 44%,#fff 44% 56%,transparent 56%)"></div>
<div class="a" style="left:442px;top:75px;width:1130px;height:3px;background:#ececec"></div>
<div class="a" style="left:442px;top:78px;width:1130px;height:25px;background:#cdcdcd;border-bottom:1px solid #7a7a7a;box-sizing:border-box"></div>
<div class="a" style="left:442px;top:103px;width:1130px;height:27px;background:#ececec"></div>
<svg class="i" style="left:448px;top:108px"><use href="#fade"/></svg><svg class="i" style="left:473px;top:108px"><use href="#fade"/></svg><div class="sep" style="left:494px;top:105px"></div>
<svg class="i" style="left:501px;top:108px"><use href="#iface"/></svg><svg class="i" style="left:519px;top:110px;width:12px;height:12px"><use href="#dl"/></svg>
<svg class="i" style="left:541px;top:108px"><use href="#cyl"/></svg><div class="sep" style="left:563px;top:105px"></div>
<svg class="i" style="left:571px;top:108px"><use href="#lst"/></svg>
<div class="a" style="left:592px;top:105px;width:22px;height:22px;box-sizing:border-box;border:1px solid #3a6ad0;background:#f4f4f4"></div><svg class="i" style="left:595px;top:108px"><use href="#tagp"/></svg>
<svg class="i" style="left:618px;top:108px"><use href="#mon"/></svg><svg class="i" style="left:636px;top:110px;width:12px;height:12px"><use href="#dl"/></svg>
<svg class="i" style="left:654px;top:108px"><use href="#star"/></svg><div class="sep" style="left:675px;top:105px"></div>
<svg class="i" style="left:683px;top:108px"><use href="#cr"/></svg><svg class="i" style="left:707px;top:108px"><use href="#cr2"/></svg><svg class="i" style="left:731px;top:108px"><use href="#gr1"/></svg><svg class="i" style="left:754px;top:108px"><use href="#gr1"/></svg><svg class="i" style="left:779px;top:108px"><use href="#fade"/></svg>
<svg class="i" style="left:803px;top:108px"><use href="#iface"/></svg><div class="sep" style="left:824px;top:105px"></div>
<svg class="i" style="left:832px;top:108px"><use href="#bml"/></svg><svg class="i" style="left:856px;top:108px"><use href="#ind"/></svg><svg class="i" style="left:880px;top:108px"><use href="#oud"/></svg><svg class="i" style="left:903px;top:108px"><use href="#ali"/></svg><svg class="i" style="left:928px;top:108px"><use href="#cmt"/></svg><svg class="i" style="left:952px;top:108px"><use href="#uncm"/></svg><div class="sep" style="left:973px;top:105px"></div>
<svg class="i" style="left:981px;top:108px"><use href="#bm"/></svg><svg class="i" style="left:1005px;top:108px"><use href="#bml"/></svg><svg class="i" style="left:1028px;top:108px"><use href="#bmr"/></svg><div class="sep" style="left:1050px;top:105px"></div>
<svg class="i" style="left:1058px;top:108px"><use href="#mag"/></svg><svg class="i" style="left:1082px;top:108px"><use href="#gl"/></svg><svg class="i" style="left:1105px;top:108px"><use href="#gl2"/></svg><div class="sep" style="left:1127px;top:105px"></div>
<svg class="i" style="left:1134px;top:108px"><use href="#dbl"/></svg><svg class="i" style="left:1539px;top:108px"><use href="#usr"/></svg>
<div class="a" style="left:442px;top:130px;width:1130px;height:21px;background:#ececec"></div>
<span class="t" style="left:467px;top:131px;font-weight:bold;font-size:14px">10秒循环</span>
<div class="a hdr" style="left:442px;top:151px;width:1130px;height:19px"></div>
<div class="a" style="left:656px;top:152px;width:119px;height:17px;background:linear-gradient(#f4f6fa,#dde3ec)"></div>
<div class="a" style="left:466px;top:152px;width:1px;height:17px;background:#b0b0b0"></div><div class="a" style="left:485px;top:152px;width:1px;height:17px;background:#b0b0b0"></div><div class="a" style="left:655px;top:152px;width:1px;height:17px;background:#b0b0b0"></div><div class="a" style="left:775px;top:152px;width:1px;height:17px;background:#b0b0b0"></div><div class="a" style="left:875px;top:152px;width:1px;height:17px;background:#b0b0b0"></div><div class="a" style="left:955px;top:152px;width:1px;height:17px;background:#b0b0b0"></div><div class="a" style="left:1035px;top:152px;width:1px;height:17px;background:#b0b0b0"></div><div class="a" style="left:1085px;top:152px;width:1px;height:17px;background:#b0b0b0"></div><div class="a" style="left:1155px;top:152px;width:1px;height:17px;background:#b0b0b0"></div><div class="a" style="left:1225px;top:152px;width:1px;height:17px;background:#b0b0b0"></div><div class="a" style="left:1455px;top:152px;width:1px;height:17px;background:#b0b0b0"></div><div class="a" style="left:1553px;top:152px;width:1px;height:17px;background:#b0b0b0"></div>
<span class="t" style="left:490px;top:152px">名称</span><span class="t" style="left:659px;top:152px">数据类型</span><span class="t" style="left:779px;top:152px">默认值</span><span class="t" style="left:880px;top:152px">保持</span><span class="t" style="left:959px;top:152px">可从 HMI/O..</span><span class="t" style="left:1040px;top:152px">从 H...</span><span class="t" style="left:1089px;top:152px">在 HMI ...</span><span class="t" style="left:1160px;top:152px">设定值</span><span class="t" style="left:1229px;top:152px">注释</span>

<div id="tb">
<div style="top:0"><span class="n">4</span><svg class="i" style="left:26px;top:1px"><use href="#tag"/></svg><i class="ad" style="left:48px;top:6px"></i><span class="t" style="left:67px;top:0">Output</span><i class="k x1"></i><i class="k x2"></i><i class="k x3"></i><i class="k x4"></i></div>
<div style="top:19px"><span class="n">5</span><i class="m"></i><i class="a" style="left:50px;top:6px;width:5px;height:6px;background:#2a48c8"></i><span class="t g" style="left:85px;top:0">&lt;新增&gt;</span><i class="k x1"></i><i class="k x2"></i><i class="k x3"></i><i class="k x4"></i></div>
<div style="top:38px"><span class="n">6</span><svg class="i" style="left:26px;top:1px"><use href="#tag"/></svg><i class="ad" style="left:48px;top:6px"></i><span class="t" style="left:67px;top:0">InOut</span><i class="k x1"></i><i class="k x2"></i><i class="k x3"></i><i class="k x4"></i></div>
<div class="e" style="top:57px"><span class="n">7</span><svg class="i" style="left:26px;top:1px"><use href="#tag"/></svg><i class="a" style="left:50px;top:6px;width:5px;height:6px;background:#2a48c8"></i><span class="t" style="left:85px;top:0">SHL_out</span><span class="t" style="left:218px;top:0">Word</span><span class="t g" style="left:337px;top:0">16#0</span><span class="t" style="left:438px;top:0">非保持</span><i class="kc x1"></i><i class="kc x2"></i><i class="kc x3"></i><i class="k x4"></i></div>
<div style="top:76px"><span class="n">8</span><svg class="i" style="left:26px;top:1px"><use href="#tag"/></svg><i class="ad" style="left:48px;top:6px"></i><span class="t" style="left:67px;top:0">Static</span><i class="k x1"></i><i class="k x2"></i><i class="k x3"></i><i class="k x4"></i></div>
<div class="e" style="top:95px"><span class="n">9</span><svg class="i" style="left:26px;top:1px"><use href="#tag"/></svg><i class="a" style="left:50px;top:6px;width:5px;height:6px;background:#2a48c8"></i><span class="t" style="left:85px;top:0">i</span><span class="t" style="left:218px;top:0">Word</span><span class="t g" style="left:337px;top:0">16#0</span><span class="t" style="left:438px;top:0">非保持</span><i class="kc x1"></i><i class="kc x2"></i><i class="kc x3"></i><i class="kd x4"></i></div>
<div style="top:114px"><i class="a" style="left:783px;top:0;width:328px;height:18px;background:#efefef"></i><span class="n" style="background:#c4d0d8">10</span><i class="a" style="left:44px;top:0;width:170px;height:18px;background:#efefef"></i><svg class="i" style="left:26px;top:1px"><use href="#tag"/></svg><i class="a" style="left:50px;top:6px;width:5px;height:6px;background:#2a48c8"></i><i class="ar" style="left:70px;top:4px"></i><span class="t" style="left:84px;top:0">TIMER</span><i class="a" style="left:214px;top:-1px;width:120px;height:20px;background:#fff;box-sizing:border-box;border:1px solid #a8bcd8"></i><span class="t" style="left:218px;top:0">IEC_TIMER</span><i class="a" style="left:316px;top:1px;width:16px;height:16px;box-sizing:border-box;border:1px solid #666;background:#dbe4f4"></i><i class="a" style="left:321px;top:5px;width:6px;height:8px;background:repeating-linear-gradient(#14245e 0 1px,#fff 1px 2px)"></i><span class="t" style="left:438px;top:0">非保持</span><i class="a" style="left:496px;top:1px;width:17px;height:17px;box-sizing:border-box;border:1px solid #666;background:linear-gradient(#f2f2f2,#d0d0d0)"></i><i class="ad" style="left:500px;top:7px;border-top-color:#14245e"></i><i class="kc x1"></i><i class="kc x2"></i><i class="kc x3"></i><i class="k x4"></i></div>
<div class="e" style="top:133px"><span class="n">11</span><svg class="i" style="left:26px;top:1px"><use href="#tag"/></svg><i class="a" style="left:50px;top:6px;width:5px;height:6px;background:#2a48c8"></i><span class="t" style="left:85px;top:0">bool_in</span><span class="t" style="left:218px;top:0">Bool</span><span class="t g" style="left:337px;top:0">false</span><span class="t" style="left:438px;top:0">非保持</span><i class="kc x1"></i><i class="kc x2"></i><i class="kc x3"></i><i class="kd x4"></i></div>
<div style="top:152px"><span class="n">12</span><svg class="i" style="left:26px;top:1px"><use href="#tag"/></svg><i class="ad" style="left:48px;top:6px"></i><span class="t" style="left:67px;top:0">Temp</span><i class="k x1"></i><i class="k x2"></i><i class="k x3"></i><i class="k x4"></i></div>
<div style="top:171px"><span class="n">13</span><i class="m"></i><i class="a" style="left:50px;top:6px;width:5px;height:6px;background:#2a48c8"></i><span class="t g" style="left:85px;top:0">&lt;新增&gt;</span><i class="k x1"></i><i class="k x2"></i><i class="k x3"></i><i class="k x4"></i></div>
<div style="top:190px"><span class="n">14</span><svg class="i" style="left:26px;top:1px"><use href="#tag"/></svg><i class="ad" style="left:48px;top:6px"></i><span class="t" style="left:67px;top:0">Constant</span><i class="k x1"></i><i class="k x2"></i><i class="k x3"></i><i class="k x4"></i></div>
<div style="top:209px"><span class="n">15</span><i class="m"></i><i class="a" style="left:50px;top:6px;width:5px;height:6px;background:#2a48c8"></i><span class="t g" style="left:85px;top:0">&lt;新增&gt;</span><i class="k x1"></i><i class="k x2"></i><i class="k x3"></i><i class="k x4"></i></div>
<i class="vl" style="left:24px"></i><i class="vl" style="left:43px"></i><i class="vl" style="left:213px"></i><i class="vl" style="left:333px"></i><i class="vl" style="left:433px"></i><i class="vl" style="left:513px"></i><i class="vl" style="left:593px"></i><i class="vl" style="left:643px"></i><i class="vl" style="left:713px"></i><i class="vl" style="left:783px"></i><i class="vl" style="left:1013px"></i>
</div>
<div class="a" style="left:1553px;top:170px;width:19px;height:219px;background:#bdbdbd"></div>
<div class="up" style="left:1553px;top:172px"></div>
<div class="sb" style="left:1553px;top:212px;width:18px;height:78px;background:linear-gradient(90deg,#eee,#f8f8f8,#e8e8e8)"></div>
<div class="a" style="left:1558px;top:248px;width:8px;height:6px;background:repeating-linear-gradient(#444 0 1px,transparent 1px 2px)"></div>
<div class="dn2" style="left:1553px;top:372px"></div>
<div class="a" style="left:442px;top:389px;width:1130px;height:8px;background:#dedede;border-top:1px solid #7a7a7a;border-bottom:1px solid #8a8a8a;box-sizing:border-box"></div>
<div class="a" style="left:978px;top:390px;width:22px;height:6px;background:#c4c4c4;border-left:1px solid #888;border-right:1px solid #888"></div><i class="a" style="left:986px;top:391px;width:0;height:0;border-bottom:4px solid #222;border-left:3px solid transparent;border-right:3px solid transparent"></i>
<div class="a" style="left:1011px;top:390px;width:23px;height:6px;background:#c4c4c4;border-left:1px solid #888;border-right:1px solid #888"></div><i class="a" style="left:1020px;top:391px;width:0;height:0;border-top:4px solid #222;border-left:3px solid transparent;border-right:3px solid transparent"></i>

<!-- editor -->
<div class="a" style="left:442px;top:397px;width:40px;height:573px;background:#fff"></div>
<div class="a" style="left:442px;top:397px;width:40px;height:24px;background:#efefef"></div>
<div class="a" style="left:442px;top:422px;width:40px;height:548px;background:repeating-linear-gradient(#efefef 0 18px,#fff 18px 19px)"></div>
<div class="a" style="left:482px;top:397px;width:7px;height:573px;background:#e2e2e2;border-left:1px solid #999;border-right:1px solid #999;box-sizing:border-box"></div>
<div class="a" style="left:483px;top:655px;width:5px;height:57px;background:#aeaeae"></div>
<i class="a" style="left:484px;top:666px;width:0;height:0;border-right:3px solid #111;border-top:3px solid transparent;border-bottom:3px solid transparent"></i><i class="a" style="left:484px;top:699px;width:0;height:0;border-left:3px solid #111;border-top:3px solid transparent;border-bottom:3px solid transparent"></i>
<div class="a" style="left:489px;top:397px;width:19px;height:555px;background:#bdbdbd;border-right:1px solid #888"></div>
<div class="a" style="left:509px;top:397px;width:1063px;height:555px;background:#fff"></div>
<div class="a" style="left:543px;top:414px;width:1029px;height:17px;background:#e6ffe6"></div>
<div class="a" style="left:998px;top:398px;width:15px;height:15px;background:#dedede"></div><div class="a" style="left:998px;top:415px;width:15px;height:15px;background:#dedede"></div><div class="a" style="left:998px;top:432px;width:15px;height:15px;background:#dedede"></div><div class="a" style="left:998px;top:449px;width:15px;height:15px;background:#dedede"></div>
<div class="a" style="left:1015px;top:398px;width:15px;height:15px;background:#efefef"></div><div class="a" style="left:1015px;top:415px;width:15px;height:15px;background:#e6ffe6"></div><div class="a" style="left:1015px;top:432px;width:15px;height:15px;background:#efefef"></div><div class="a" style="left:1015px;top:449px;width:15px;height:15px;background:#efefef"></div>
<div class="a" style="left:1032px;top:398px;width:124px;height:15px;background:#efefef"></div><div class="a" style="left:1032px;top:415px;width:124px;height:15px;background:#e6ffe6"></div><div class="a" style="left:1032px;top:432px;width:124px;height:15px;background:#efefef"></div><div class="a" style="left:1032px;top:449px;width:124px;height:15px;background:#efefef"></div>
<div class="a" style="left:1158px;top:398px;width:160px;height:15px;background:#efefef"></div><div class="a" style="left:1158px;top:415px;width:160px;height:15px;background:#e6ffe6"></div><div class="a" style="left:1158px;top:432px;width:160px;height:15px;background:#efefef"></div><div class="a" style="left:1158px;top:449px;width:160px;height:15px;background:#efefef"></div>
<div class="a" style="left:995px;top:397px;width:1px;height:555px;background:#b4b4ea"></div>
<div class="a" style="left:1320px;top:397px;width:1px;height:555px;background:#b4b4ea"></div>
<div style="font:12px/17px 'Liberation Sans',sans-serif;color:#666">
<span class="t" style="left:521px;top:397px;line-height:17px">1</span><span class="t" style="left:521px;top:414px;line-height:17px">2</span><span class="t" style="left:521px;top:431px;line-height:17px">3</span><span class="t" style="left:521px;top:448px;line-height:17px">4</span></div>
<span class="t" style="left:543px;top:397px;font:11.7px/17px 'Liberation Mono',monospace;color:#3d3a8c"><b style="color:#0000ff;font-weight:normal">IF</b> #I_str <b style="color:#0000ff;font-weight:normal">THEN</b></span>
<span class="t" style="left:543px;top:414px;font:11.7px/17px 'Liberation Mono',monospace;color:#3d3a8c">#TIMER</span>
<svg class="a" style="left:543px;top:410px" width="15" height="4"><path d="M0 1l2 2 2-2 2 2 2-2 2 2 2-2 2 2" fill="none" stroke="#e02020"/></svg>
<svg class="a" style="left:578px;top:427px" width="8" height="4"><path d="M0 1l2 2 2-2 2 2" fill="none" stroke="#e02020"/></svg>
<div class="a" style="left:585px;top:414px;width:1px;height:17px;background:#000"></div>
<svg class="a" style="left:740px;top:380px" width="480" height="290">
<g fill="#fff" stroke="#ececec" stroke-width="1">
<text transform="translate(50 238) rotate(-30)" font-family="Liberation Sans,Noto Sans CJK SC,sans-serif" font-size="42">西门子工业 技术论坛</text>
<text transform="translate(97 258) rotate(-33)" font-family="Liberation Sans,sans-serif" font-size="28" font-style="italic" textLength="375">support.industry.siemens.com/cs</text>
</g></svg>
<!-- status -->
<div class="a" style="left:489px;top:952px;width:1083px;height:18px;background:#ececec"></div>
<span class="t" style="left:1179px;top:951px;font-size:11.5px;color:#333">Ln: 2</span><span class="t" style="left:1234px;top:951px;font-size:11.5px;color:#333">Cl: 7</span><span class="t" style="left:1279px;top:951px;font-size:11.5px;color:#333">INS</span>
<div class="a" style="left:1313px;top:952px;width:155px;height:18px;background:#fff;border:1px solid #999;box-sizing:border-box;line-height:17px;padding-left:2px">100%</div>
<div class="a" style="left:1452px;top:953px;width:15px;height:16px;background:linear-gradient(#f2f2f2,#ccc);border-left:1px solid #888;box-sizing:border-box"></div><i class="ad" style="left:1455px;top:959px;border-top-color:#14245e;border-left-width:4px;border-right-width:4px"></i>
<div class="a" style="left:1487px;top:960px;width:66px;height:1px;background:#666"></div><div class="a" style="left:1487px;top:966px;width:66px;height:3px;background:repeating-linear-gradient(90deg,#555 0 1px,transparent 1px 4px)"></div><div class="a" style="left:1505px;top:955px;width:7px;height:10px;background:linear-gradient(#ddd,#999);border:1px solid #888;box-sizing:border-box"></div>
<div class="a" style="left:442px;top:970px;width:1130px;height:3px;background:#1e2a3c"></div>
<div class="a" style="left:442px;top:973px;width:1130px;height:24px;background:#b0b0b0"></div>
<div class="a" style="left:442px;top:997px;width:1130px;height:1px;background:#eee"></div>
<div class="tab" style="left:1265px;width:75px;padding-left:22px"><svg class="i" style="left:3px;top:3px"><use href="#prp"/></svg>属性</div>
<div class="tab" style="left:1342px;width:80px;padding-left:22px;color:#111;background:#ececec"><svg class="i" style="left:3px;top:3px"><use href="#inf"/></svg>信息<span class="a" style="left:62px;top:4px;width:12px;height:13px;border-radius:6px;background:#f2d020;border:1px solid #222;box-sizing:border-box;font:bold 10px/11px 'Liberation Sans',sans-serif;text-align:center;color:#111">i</span></div>
<div class="tab" style="left:1423px;width:74px;padding-left:22px"><svg class="i" style="left:3px;top:3px"><use href="#dia"/></svg>诊断</div>
<div class="a" style="left:1519px;top:982px;width:7px;height:11px;background:#fff;box-shadow:3px -2px 0 -1px #fff"></div>
<div class="a" style="left:1536px;top:981px;width:11px;height:12px;background:repeating-linear-gradient(#eee 0 1px,transparent 1px 3px);border:1px solid #eee;box-sizing:border-box"></div>
<i class="a" style="left:1554px;top:982px;width:0;height:0;border-bottom:8px solid #fff;border-left:6px solid transparent;border-right:6px solid transparent"></i>
<div class="a" style="left:1572px;top:51px;width:2px;height:947px;background:#1e2a3c"></div>

<!-- right panel -->
<div class="a" style="left:1574px;top:51px;width:321px;height:24px;background:#adadad"></div>
<span class="t h" style="left:1580px;top:51px;line-height:22px">指令</span>
<div class="a" style="left:1845px;top:60px;width:8px;height:9px;background:#fff;box-shadow:3px -3px 0 -1px #fff"></div>
<div class="a" style="left:1860px;top:57px;width:11px;height:11px;background:repeating-linear-gradient(90deg,#eee 0 2px,#adadad 2px 3px)"></div>
<div class="a" style="left:1881px;top:57px;width:0;height:0;border-left:6px solid #fff;border-top:6px solid transparent;border-bottom:6px solid transparent"></div>
<div class="a" style="left:1574px;top:75px;width:321px;height:7px;background:#e8e8e8"></div>
<div class="a" style="left:1574px;top:82px;width:321px;height:21px;background:linear-gradient(#f6f6f6,#eaeaea);border-bottom:1px solid #7a7a7a;box-sizing:border-box"></div>
<span class="t" style="left:1580px;top:82px;font-weight:bold;font-size:14px;color:#111">选项</span>
<div class="a" style="left:1574px;top:103px;width:321px;height:27px;background:#ececec"></div>
<div class="a" style="left:1580px;top:108px;width:120px;height:18px;background:#fff;border:1px solid #8a8a8a;box-sizing:border-box"></div>
<svg class="i" style="left:1709px;top:109px"><use href="#bino"/></svg><svg class="i" style="left:1733px;top:109px"><use href="#bino"/></svg><div class="sep" style="left:1754px;top:105px"></div>
<svg class="i" style="left:1761px;top:108px"><use href="#cyc"/></svg><svg class="i" style="left:1785px;top:108px"><use href="#cyb"/></svg>
<div class="a" style="left:1845px;top:105px;width:22px;height:22px;box-sizing:border-box;border:1px solid #3a6ad0;background:#f4f4f4"></div><svg class="i" style="left:1848px;top:108px"><use href="#pan"/></svg><svg class="i" style="left:1872px;top:108px"><use href="#grid"/></svg>
<div class="a" style="left:1574px;top:130px;width:321px;height:4px;background:#a4a4a4"></div>
<div class="phd" style="top:133px"><i class="chev"></i><span>收藏夹</span></div>
<div class="a" style="left:1574px;top:154px;width:321px;height:3px;background:#a4a4a4"></div>
<div class="phd" style="top:157px"><i class="chev dn"></i><span>基本指令</span></div>
<div class="a hdr" style="left:1574px;top:178px;width:321px;height:19px"></div>
<div class="a" style="left:1574px;top:179px;width:181px;height:17px;background:linear-gradient(#f4f6fa,#dde3ec)"></div>
<div class="a" style="left:1755px;top:179px;width:1px;height:17px;background:#a8a8a8"></div>
<span class="t" style="left:1578px;top:179px">名称</span><span class="t" style="left:1760px;top:179px">描述</span>
<div id="ins">
<div><i class="ar" style="left:7px;top:4px"></i><svg class="i" style="left:19px;top:1px"><use href="#ifo"/></svg><i class="a" style="left:23px;top:9px;width:9px;height:2px;background:#14245e"></i><span class="t" style="left:39px;top:0">位逻辑运算</span></div>
<div><i class="ad" style="left:4px;top:6px"></i><svg class="i" style="left:19px;top:1px"><use href="#ifo"/></svg><i class="a" style="left:24px;top:6px;width:9px;height:9px;border:1px solid #14245e;border-radius:50%;box-sizing:border-box"></i><span class="t" style="left:39px;top:0">定时器操作</span></div>
<div><svg class="i" style="left:38px;top:1px;color:#1a20d8"><use href="#blk"/></svg><span class="t" style="left:57px;top:0">TP</span><span class="de">生成脉冲</span></div>
<div><svg class="i" style="left:38px;top:1px;color:#1a20d8"><use href="#blk"/></svg><span class="t" style="left:57px;top:0">TON</span><i class="a" style="left:181px;top:0;width:140px;height:18px;background:#d5dade"></i><span class="de">接通延时</span></div>
<div><svg class="i" style="left:38px;top:1px;color:#1a20d8"><use href="#blk"/></svg><span class="t" style="left:57px;top:0">TOF</span><span class="de">关断延时</span></div>
<div><svg class="i" style="left:38px;top:1px;color:#1a20d8"><use href="#blk"/></svg><span class="t" style="left:57px;top:0">TONR</span><span class="de">时间累加器</span></div>
<div><svg class="i" style="left:38px;top:1px;color:#1a20d8"><use href="#blk"/></svg><span class="t" style="left:57px;top:0;letter-spacing:.2px;font-size:11.5px">RESET_TIMER</span><span class="de">复位定时器</span></div>
<div><svg class="i" style="left:38px;top:1px;color:#1a20d8"><use href="#blk"/></svg><span class="t" style="left:57px;top:0;letter-spacing:.2px;font-size:11.5px">PRESET_TIMER</span><span class="de">加载持续时间</span></div>
<div><i class="ar" style="left:7px;top:4px"></i><svg class="i" style="left:19px;top:1px"><use href="#ifo"/></svg><span class="t" style="left:23px;top:2px;font:bold 9px/14px 'Liberation Sans',sans-serif;color:#14245e">+1</span><span class="t" style="left:39px;top:0">计数器操作</span></div>
<div><i class="ar" style="left:7px;top:4px"></i><svg class="i" style="left:19px;top:1px"><use href="#ifo"/></svg><span class="t" style="left:25px;top:2px;font:bold 10px/14px 'Liberation Sans',sans-serif;color:#14245e">&lt;</span><span class="t" style="left:39px;top:0">比较操作</span></div>
<div><i class="ar" style="left:7px;top:4px"></i><svg class="i" style="left:19px;top:1px"><use href="#ifo"/></svg><span class="t" style="left:25px;top:2px;font:bold 10px/14px 'Liberation Sans',sans-serif;color:#14245e">±</span><span class="t" style="left:39px;top:0">数学函数</span></div>
<div><i class="ar" style="left:7px;top:4px"></i><svg class="i" style="left:19px;top:1px"><use href="#ifo"/></svg><i class="a" style="left:24px;top:8px;width:9px;height:3px;border-top:2px solid #14245e;border-radius:50%"></i><span class="t" style="left:39px;top:0">移动操作</span></div>
<div><i class="ar" style="left:7px;top:4px"></i><svg class="i" style="left:19px;top:1px"><use href="#ifo"/></svg><i class="a" style="left:22px;top:5px;width:0;height:0;border-bottom:5px solid #14245e;border-left:4px solid transparent;border-right:4px solid transparent"></i><span class="t" style="left:39px;top:0">转换操作</span></div>
<div><i class="ar" style="left:7px;top:4px"></i><svg class="i" style="left:19px;top:1px"><use href="#ifo"/></svg><i class="a" style="left:22px;top:6px;width:9px;height:6px;border-bottom:2px solid #14245e;border-left:2px solid #14245e;box-sizing:border-box"></i><span class="t" style="left:39px;top:0">程序控制指令</span></div>
<div><i class="ar" style="left:7px;top:4px"></i><svg class="i" style="left:19px;top:1px"><use href="#ifo"/></svg><span class="t" style="left:22px;top:2px;font:bold 8px/14px 'Liberation Sans',sans-serif;color:#14245e">DB</span><span class="t" style="left:39px;top:0">字逻辑运算</span></div>
<div><i class="ar" style="left:7px;top:4px"></i><svg class="i" style="left:19px;top:1px"><use href="#ifo"/></svg><i class="a" style="left:22px;top:9px;width:10px;height:2px;background:#14245e"></i><span class="t" style="left:39px;top:0">移位和循环</span></div>
<div></div><div></div><div></div><div></div><div></div><div></div><div></div><div></div><div></div><div></div><div></div><div></div><div></div><div></div><div></div><div></div><div></div><div></div><div></div><div></div>
<i class="a" style="left:181px;top:0;width:1px;height:685px;background:#fff"></i>
</div>
<div class="a" style="left:1574px;top:883px;width:321px;height:19px;background:#bdbdbd"></div>
<div class="sb" style="left:1574px;top:885px;width:17px;height:17px;background:#ececec"></div><i class="chev" style="left:1581px;top:890px;transform:rotate(225deg) scale(.7)"></i>
<div class="sb" style="left:1593px;top:885px;width:270px;height:17px;background:linear-gradient(#f6f6f6,#e0e0e0)"></div>
<div class="a" style="left:1724px;top:889px;width:8px;height:9px;background:repeating-linear-gradient(90deg,#444 0 1px,transparent 1px 2px)"></div>
<div class="sb" style="left:1878px;top:885px;width:17px;height:17px;background:#ececec"></div><i class="chev" style="left:1882px;top:890px;transform:rotate(45deg) scale(.7)"></i>
<div class="a" style="left:1574px;top:902px;width:321px;height:96px;background:#a4a4a4"></div>
<div class="phd" style="top:905px"><i class="chev"></i><span>扩展指令</span></div>
<div class="phd" style="top:929px"><i class="chev"></i><span>工艺</span></div>
<div class="phd" style="top:953px"><i class="chev"></i><span>通信</span></div>
<div class="phd" style="top:977px"><i class="chev"></i><span>选件包</span></div>
<div class="a" style="left:1895px;top:51px;width:1px;height:947px;background:#1e2a3c"></div>
<div class="a" style="left:1896px;top:51px;width:24px;height:947px;background:#adadad"></div>
<div class="rt" style="top:82px;height:72px;background:#f0f0f0"><svg class="i" style="left:3px;top:2px"><use href="#grid"/></svg><span class="rtx" style="color:#111">指令</span></div>
<div class="rt" style="top:158px;height:72px"><svg class="i" style="left:3px;top:2px"><use href="#dia"/></svg><span class="rtx">测试</span></div>
<div class="rt" style="top:234px;height:72px"><svg class="i" style="left:3px;top:2px"><use href="#paste"/></svg><span class="rtx">任务</span></div>
<div class="rt" style="top:310px;height:40px"><svg class="i" style="left:3px;top:2px"><use href="#v2"/></svg><span class="rtx">库</span></div>

<!-- bottom -->
<div class="a" style="left:0;top:998px;width:1920px;height:29px;background:#1c1c1c"></div>
<i class="a" style="left:36px;top:1006px;width:0;height:0;border-right:6px solid #fff;border-top:6px solid transparent;border-bottom:6px solid transparent"></i>
<span class="t" style="left:53px;top:1003px;color:#fff;font-weight:bold;font-size:13px;letter-spacing:.8px">Portal 视图</span>
<div class="a" style="left:181px;top:1002px;width:113px;height:20px;background:#bdbdbd"></div><svg class="i" style="left:184px;top:1004px"><use href="#tab"/></svg><span class="t" style="left:204px;top:1002px">总览</span>
<div class="a" style="left:297px;top:1002px;width:113px;height:20px;background:#fff"></div><svg class="i" style="left:300px;top:1004px;color:#1290ea"><use href="#blk"/></svg><span class="t" style="left:320px;top:1002px;font-weight:bold;font-size:13px">10秒循环 (F...</span>
<div class="a" style="left:1564px;top:1002px;width:20px;height:20px;background:#cfcfcf"></div><svg class="i" style="left:1566px;top:1004px"><use href="#tab"/></svg>
<div class="a" style="left:1590px;top:998px;width:1px;height:29px;background:#555"></div>
<div class="a" style="left:1594px;top:1006px;width:14px;height:14px;border-radius:7px;background:#1a20e0"></div><div class="a" style="left:1599px;top:1007px;width:4px;height:8px;border:solid #fff;border-width:0 2px 2px 0;transform:rotate(40deg)"></div>
<span class="t" style="left:1615px;top:1003px;color:#fff;letter-spacing:.4px">项目 1500 已打开。</span>
</div>
</body></html>
